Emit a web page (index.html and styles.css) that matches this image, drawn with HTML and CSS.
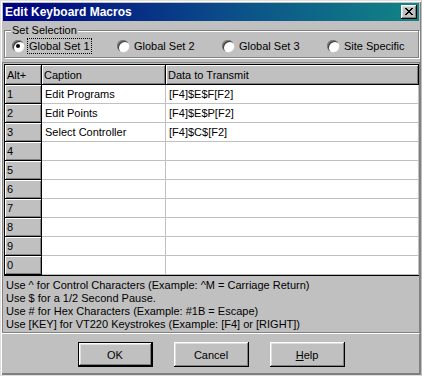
FILE: index.html
```html
<!DOCTYPE html>
<html>
<head>
<meta charset="utf-8">
<link rel="stylesheet" href="styles.css">
</head>
<body>
<div class="window">
  <div class="titlebar">
    <span class="title">Edit Keyboard Macros</span>
    <span class="close"><svg width="8" height="7" viewBox="0 0 8 7" shape-rendering="crispEdges"><path d="M0 0h2v1h-2z M6 0h2v1h-2z M1 1h2v1h-2z M5 1h2v1h-2z M2 2h4v1h-4z M3 3h2v1h-2z M2 4h4v1h-4z M1 5h2v1h-2z M5 5h2v1h-2z M0 6h2v1h-2z M6 6h2v1h-2z" fill="#000"/></svg></span>
  </div>
  <fieldset class="group">
    <legend>Set Selection</legend>
    <div class="radios">
      <div class="opt"><span class="radio checked"></span><span class="lbl focus">Global Set 1</span></div>
      <div class="opt"><span class="radio"></span><span class="lbl">Global Set 2</span></div>
      <div class="opt"><span class="radio"></span><span class="lbl">Global Set 3</span></div>
      <div class="opt"><span class="radio"></span><span class="lbl">Site Specific</span></div>
    </div>
  </fieldset>
  <div class="panel">
    <div class="grid">
      <table class="macros">
        <colgroup><col class="c1"><col class="c2"><col class="c3"></colgroup>
        <thead>
          <tr><th>Alt+</th><th>Caption</th><th>Data to Transmit</th></tr>
        </thead>
        <tbody>
          <tr><th>1</th><td>Edit Programs</td><td>[F4]$E$F[F2]</td></tr>
          <tr><th>2</th><td>Edit Points</td><td>[F4]$E$P[F2]</td></tr>
          <tr><th>3</th><td>Select Controller</td><td>[F4]$C$[F2]</td></tr>
          <tr><th>4</th><td></td><td></td></tr>
          <tr><th>5</th><td></td><td></td></tr>
          <tr><th>6</th><td></td><td></td></tr>
          <tr><th>7</th><td></td><td></td></tr>
          <tr><th>8</th><td></td><td></td></tr>
          <tr><th>9</th><td></td><td></td></tr>
          <tr><th>0</th><td></td><td></td></tr>
        </tbody>
      </table>
    </div>
    <div class="help">
      <div>Use ^ for Control Characters (Example: ^M = Carriage Return)</div>
      <div>Use $ for a 1/2 Second Pause.</div>
      <div>Use # for Hex Characters (Example: #1B = Escape)</div>
      <div>Use [KEY] for VT220 Keystrokes (Example: [F4] or [RIGHT])</div>
    </div>
  </div>
  <div class="buttons">
    <button class="btn default">OK</button>
    <button class="btn">Cancel</button>
    <button class="btn"><u>H</u>elp</button>
  </div>
</div>
</body>
</html>
```
FILE: styles.css
```css
* { box-sizing: border-box; }
html, body { margin: 0; padding: 0; background: #c0c0c0; }
body { font-family: "Liberation Sans", Arial, sans-serif; font-size: 11px; color: #000; }

.window {
  width: 422px;
  height: 376px;
  background: #c0c0c0;
  border: 1px solid;
  border-color: #dfdfdf #c0c0c0 #dfdfdf #dfdfdf;
  box-shadow: inset 1px 1px 0 #fff, inset -1px -1px 0 #808080;
  padding: 1px;
  display: flex;
  flex-direction: column;
}

.titlebar {
  height: 18px;
  margin: 1px 1px 0 1px;
  background: linear-gradient(90deg, #000080 0%, #0b4f8a 55%, #118585 100%);
  display: flex;
  align-items: center;
  justify-content: space-between;
  padding: 0 2px 0 2px;
  flex: none;
}
.title {
  color: #fff;
  font-weight: bold;
  font-size: 12px;
  line-height: 14px;
}
.close {
  width: 16px;
  height: 14px;
  background: #c0c0c0;
  box-shadow: inset -1px -1px 0 #000, inset 1px 1px 0 #fff, inset -2px -2px 0 #808080, inset 2px 2px 0 #dfdfdf;
  display: flex;
  align-items: center;
  justify-content: center;
  padding: 0 1px 1px 0;
}
.close svg { display: block; }

.group {
  margin: 2px 1px 0 2px;
  padding: 1px 6px 3px 6px;
  border: 1px solid #808080;
  box-shadow: inset 1px 1px 0 #fff, 1px 1px 0 #fff;
  flex: none;
  min-width: 0;
}
.group legend {
  padding: 0 1px;
  line-height: 14px;
  background: #c0c0c0;
}
.radios {
  display: flex;
  height: 16px;
  align-items: center;
  margin-left: 1px;
}
.opt {
  width: 105px;
  display: flex;
  align-items: center;
}
.opt:last-child { width: auto; }
.radio {
  width: 12px;
  height: 12px;
  border-radius: 50%;
  background: #fff;
  box-shadow: inset 1px 1px 0 #808080, inset 2px 2px 0 #404040, 0.5px 0.5px 0 #dfdfdf;
  margin-right: 4px;
  position: relative;
  flex: none;
}
.radio.checked::after {
  content: "";
  position: absolute;
  left: 4px;
  top: 4px;
  width: 4px;
  height: 4px;
  border-radius: 50%;
  background: #000;
}
.lbl {
  padding: 0 1px;
  line-height: 14px;
}
.lbl.focus { outline: 1px dotted #000; outline-offset: 0; }

.panel {
  margin-top: 4px;
  border-top: 1px solid #808080;
  border-left: 1px solid #808080;
  border-right: 1px solid #808080;
  border-bottom: 1px solid #808080;
  padding: 1px 0 0 1px;
  flex: none;
}
.grid {
  border-top: 1px solid #000;
  border-left: 1px solid #000;
  border-bottom: 1px solid #000;
  background: #fff;
}
.macros {
  width: 100%;
  border-collapse: separate;
  border-spacing: 0;
  table-layout: fixed;
}
.macros col.c1 { width: 37px; }
.macros col.c2 { width: 124px; }
.macros th, .macros td {
  padding: 0 0 0 3px;
  text-align: left;
  font-weight: normal;
  white-space: nowrap;
  overflow: hidden;
}
.macros thead th {
  height: 20px;
  background: #c0c0c0;
  border-right: 1px solid #000;
  border-bottom: 1px solid #000;
  box-shadow: inset 1px 1px 0 #fff, inset -1px -1px 0 #808080;
  padding-left: 2px;
}
.macros tbody th {
  height: 19px;
  background: #c0c0c0;
  border-right: 1px solid #000;
  border-bottom: 1px solid #000;
  box-shadow: inset 1px 1px 0 #fff, inset -1px -1px 0 #808080;
  padding-left: 2px;
}
.macros tbody tr:last-child th { border-bottom-color: #000; }
.macros td {
  height: 19px;
  border-right: 1px solid #c0c0c0;
  border-bottom: 1px solid #c0c0c0;
}
.help {
  height: 56px;
  padding: 3px 0 0 2px;
  line-height: 13px;
  background: #c0c0c0;
}

.buttons {
  flex: none;
  height: 41px;
  border-top: 1px solid #fff;
  border-bottom: 1px solid #808080;
  border-right: 1px solid #808080;
  display: flex;
  justify-content: center;
  gap: 21px;
  padding: 8px 0 0 1px;
}
.btn {
  width: 75px;
  height: 25px;
  font-family: "Liberation Sans", Arial, sans-serif;
  font-size: 11px;
  color: #000;
  background: #c0c0c0;
  border: none;
  box-shadow: inset -1px -1px 0 #000, inset 1px 1px 0 #fff, inset -2px -2px 0 #808080, inset 2px 2px 0 #dfdfdf;
  padding: 0;
}
.btn.default {
  border: 1px solid #000;
}
```
